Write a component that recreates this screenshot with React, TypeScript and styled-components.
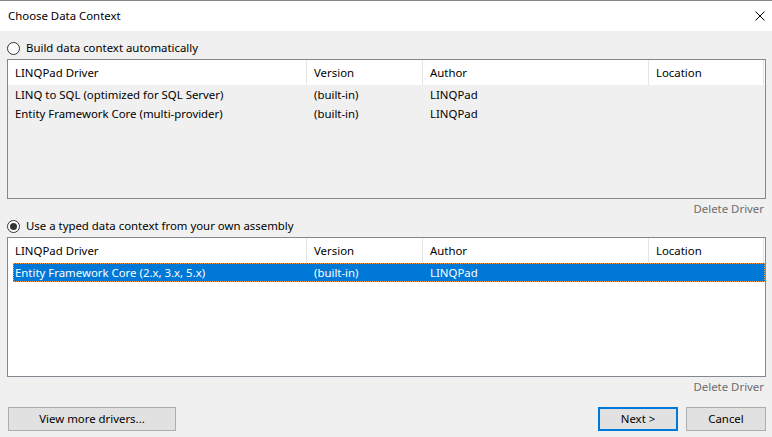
import styled, { createGlobalStyle, css } from "styled-components";

const GlobalStyle = createGlobalStyle`
  html, body {
    margin: 0;
    padding: 0;
    background: #f0f0f0;
  }
  body {
    font-family: "Noto Sans", "Open Sans", Arial, sans-serif;
    font-size: 11.4px;
    color: #000;
  }
  * {
    box-sizing: border-box;
  }
`;

const COLUMNS = "299px 116px 226px 115px";

interface Driver {
  name: string;
  version: string;
  author: string;
  location: string;
}

const autoDrivers: Driver[] = [
  { name: "LINQ to SQL (optimized for SQL Server)", version: "(built-in)", author: "LINQPad", location: "" },
  { name: "Entity Framework Core (multi-provider)", version: "(built-in)", author: "LINQPad", location: "" },
];

const typedDrivers: Driver[] = [
  { name: "Entity Framework Core (2.x, 3.x, 5.x)", version: "(built-in)", author: "LINQPad", location: "" },
];

const Window = styled.div`
  width: 772px;
  height: 437px;
  display: flex;
  flex-direction: column;
  background: #f0f0f0;
  overflow: hidden;
`;

const TitleBar = styled.div`
  height: 31px;
  flex: none;
  display: flex;
  align-items: center;
  justify-content: space-between;
  background: #fff;
  border-top: 1px solid #858585;
  padding: 0 8px 0 8px;
`;

const Title = styled.span`
  line-height: 16px;
  margin-top: -1px;
`;

const CloseIcon = styled.svg`
  width: 10px;
  height: 10px;
  margin-right: -1px;
  margin-top: -1px;
`;

const Content = styled.div`
  flex: 1;
  display: flex;
  flex-direction: column;
  padding: 6px 6px 0 7px;
`;

const RadioRow = styled.label`
  height: 22px;
  display: flex;
  align-items: center;
  gap: 6px;
  line-height: 16px;
`;

const RadioCircle = styled.span<{ $checked?: boolean }>`
  width: 13px;
  height: 13px;
  border: 1px solid #333;
  border-radius: 50%;
  background: #fff;
  display: flex;
  align-items: center;
  justify-content: center;
  flex: none;

  ${(p) =>
    p.$checked &&
    css`
      &::after {
        content: "";
        width: 7px;
        height: 7px;
        border-radius: 50%;
        background: #333;
      }
    `}
`;

const ListView = styled.div<{ $disabled?: boolean }>`
  height: 140px;
  border: 1px solid #828790;
  background: ${(p) => (p.$disabled ? "#f0f0f0" : "#fff")};
  display: flex;
  flex-direction: column;
`;

const HeaderRow = styled.div`
  display: grid;
  grid-template-columns: ${COLUMNS};
  height: 25px;
  background: #fff;
`;

const HeaderCell = styled.div`
  border-right: 1px solid #e5e5e5;
  padding: 1px 0 0 7px;
  line-height: 24px;
  white-space: nowrap;
  overflow: hidden;
`;

const DataRow = styled.div<{ $selected?: boolean }>`
  display: grid;
  grid-template-columns: 294px 116px 226px 115px;
  height: 19px;
  margin-left: 5px;
  line-height: 17px;
  border: 1px solid transparent;

  ${(p) =>
    p.$selected &&
    css`
      background: #0078d7;
      color: #fff;
      border: 1px dotted #f7a14a;
    `}
`;

const DataCell = styled.div<{ $first?: boolean }>`
  padding-left: ${(p) => (p.$first ? "1px" : "6px")};
  white-space: nowrap;
  overflow: hidden;
`;

const DeleteRow = styled.div`
  height: 16px;
  padding-top: 3px;
  line-height: 14px;
  display: flex;
  justify-content: flex-end;
`;

const DeleteLink = styled.span`
  color: #6d6d6d;
  margin-right: 2px;
`;

const Footer = styled.div`
  display: flex;
  justify-content: space-between;
  margin-top: 14px;
  padding-left: 1px;
`;

const ButtonGroup = styled.div`
  display: flex;
  gap: 8px;
`;

const Button = styled.button<{ $primary?: boolean; $width: number }>`
  width: ${(p) => p.$width}px;
  height: 24px;
  background: #e1e1e1;
  border: 1px solid #adadad;
  font-family: inherit;
  font-size: inherit;
  color: #000;
  padding: 0;
  line-height: 16px;

  ${(p) =>
    p.$primary &&
    css`
      border: 2px solid #0078d7;
    `}
`;

function Radio({ checked, label }: { checked?: boolean; label: string }) {
  return (
    <RadioRow>
      <RadioCircle $checked={checked} />
      <span>{label}</span>
    </RadioRow>
  );
}

function DriverList({
  drivers,
  disabled,
  selected,
}: {
  drivers: Driver[];
  disabled?: boolean;
  selected?: number;
}) {
  return (
    <ListView $disabled={disabled}>
      <HeaderRow>
        <HeaderCell>LINQPad Driver</HeaderCell>
        <HeaderCell>Version</HeaderCell>
        <HeaderCell>Author</HeaderCell>
        <HeaderCell>Location</HeaderCell>
      </HeaderRow>
      {drivers.map((d, i) => (
        <DataRow key={d.name} $selected={i === selected}>
          <DataCell $first>{d.name}</DataCell>
          <DataCell>{d.version}</DataCell>
          <DataCell>{d.author}</DataCell>
          <DataCell>{d.location}</DataCell>
        </DataRow>
      ))}
    </ListView>
  );
}

export default function App() {
  return (
    <>
      <GlobalStyle />
      <Window>
        <TitleBar>
          <Title>Choose Data Context</Title>
          <CloseIcon viewBox="0 0 10 10">
            <path d="M0.5 0.5 L9.5 9.5 M9.5 0.5 L0.5 9.5" stroke="#000" strokeWidth="1" fill="none" />
          </CloseIcon>
        </TitleBar>
        <Content>
          <Radio label="Build data context automatically" />
          <DriverList drivers={autoDrivers} disabled />
          <DeleteRow>
            <DeleteLink>Delete Driver</DeleteLink>
          </DeleteRow>
          <Radio checked label="Use a typed data context from your own assembly" />
          <DriverList drivers={typedDrivers} selected={0} />
          <DeleteRow>
            <DeleteLink>Delete Driver</DeleteLink>
          </DeleteRow>
          <Footer>
            <Button $width={168}>View more drivers...</Button>
            <ButtonGroup>
              <Button $primary $width={80}>
                Next &gt;
              </Button>
              <Button $width={80}>Cancel</Button>
            </ButtonGroup>
          </Footer>
        </Content>
      </Window>
    </>
  );
}
